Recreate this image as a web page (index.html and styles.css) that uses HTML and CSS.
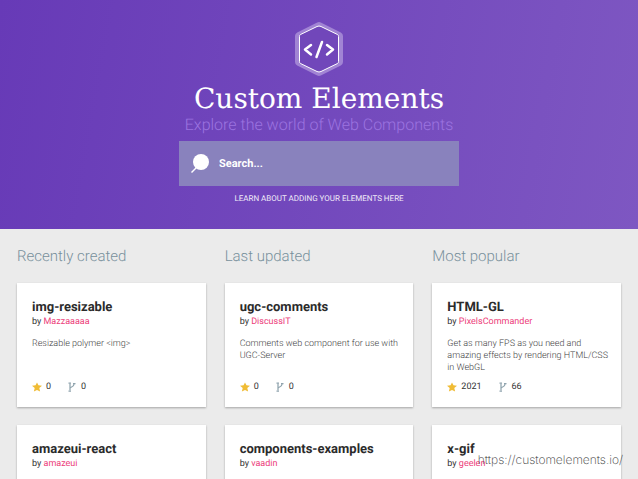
FILE: index.html
```html
<!DOCTYPE html>
<html lang="en">
<head>
    <meta charset="utf-8">
    <meta name="viewport" content="width=device-width, initial-scale=1">
    <title>Custom Elements</title>
    <link rel="stylesheet" href="styles.css">
</head>
<body>
<svg class="sprite" aria-hidden="true">
    <symbol id="star" viewBox="0 0 24 24">
        <path d="M12 1l3.500 7 8.500 1-6.500 5.500 2 8.500L12 19l-7.500 4 2-8.500L0 9l8.500-1z" fill="#f0bc35"/>
    </symbol>
    <symbol id="fork" viewBox="0 0 20 20">
        <g fill="none" stroke="#90a4ae" stroke-width="2.500">
            <path d="M6 3v14M14 4c0 7-8 5-8 9"/>
            <path d="M3 2h5M12 3h5M3 18h5"/>
        </g>
    </symbol>
</svg>

<header class="header">
    <svg class="logo" viewBox="0 0 50 56" aria-hidden="true">
        <path d="M25 5L45 15V41L25 51L5 41V15Z" fill="#a184d4" stroke="#a184d4" stroke-width="8" stroke-linejoin="round"/>
        <path d="M23 5.500Q25 4.500 27 5.500L43.500 13.500Q44.500 14 44.500 15.500V40.500Q44.500 42 43.500 42.500L27 50.500Q25 51.500 23 50.500L6.500 42.500Q5.500 42 5.500 40.500V15.500Q5.500 14 6.500 13.500Z" fill="#7147ba" stroke="#fff" stroke-width="1"/>
        <path d="M17 24L11 28.500L17 33.500M33 24L39 28.500L33 33.500M28 21L22.500 36" fill="none" stroke="#fff" stroke-width="2.500" stroke-linecap="round" stroke-linejoin="round"/>
    </svg>
    <h1 class="title">Custom Elements</h1>
    <p class="tagline">Explore the world of Web Components</p>
    <form class="search">
        <label for="search" class="search-label" aria-label="Search">
            <svg class="search-icon" viewBox="0 0 20 20" aria-hidden="true">
                <circle cx="10" cy="8" r="8" fill="#fff"/>
                <path d="M6 13L0.500 18.500" stroke="#fff" stroke-width="1.500"/>
            </svg>
        </label>
        <input type="text" id="search" class="search-input" placeholder="Search...">
    </form>
    <a href="#" class="learn">LEARN ABOUT ADDING YOUR ELEMENTS HERE</a>
</header>

<main class="columns">
    <section class="column">
        <h2 class="column-title">Recently created</h2>
        <article class="card">
            <h3 class="name">img-resizable</h3>
            <p class="author">by <a href="#">Mazzaaaaa</a></p>
            <p class="description">Resizable polymer &lt;img&gt;</p>
            <div class="stats">
                <span class="stat"><svg class="icon"><use href="#star"/></svg>0</span>
                <span class="stat"><svg class="icon"><use href="#fork"/></svg>0</span>
            </div>
        </article>
        <article class="card">
            <h3 class="name">amazeui-react</h3>
            <p class="author">by <a href="#">amazeui</a></p>
        </article>
    </section>
    <section class="column">
        <h2 class="column-title">Last updated</h2>
        <article class="card">
            <h3 class="name">ugc-comments</h3>
            <p class="author">by <a href="#">DiscussIT</a></p>
            <p class="description">Comments web component for use with UGC-Server</p>
            <div class="stats">
                <span class="stat"><svg class="icon"><use href="#star"/></svg>0</span>
                <span class="stat"><svg class="icon"><use href="#fork"/></svg>0</span>
            </div>
        </article>
        <article class="card">
            <h3 class="name">components-examples</h3>
            <p class="author">by <a href="#">vaadin</a></p>
        </article>
    </section>
    <section class="column">
        <h2 class="column-title">Most popular</h2>
        <article class="card">
            <h3 class="name">HTML-GL</h3>
            <p class="author">by <a href="#">PixelsCommander</a></p>
            <p class="description">Get as many FPS as you need and amazing effects by rendering HTML/CSS in WebGL</p>
            <div class="stats">
                <span class="stat"><svg class="icon"><use href="#star"/></svg>2021</span>
                <span class="stat"><svg class="icon"><use href="#fork"/></svg>66</span>
            </div>
        </article>
        <article class="card">
            <h3 class="name">x-gif</h3>
            <p class="author">by <a href="#">geelen</a></p>
        </article>
    </section>
</main>
<a href="#" class="source">https://customelements.io/</a>
</body>
</html>
```

FILE: styles.css
```css
* {
    margin: 0;
    padding: 0;
    box-sizing: border-box;
}

body {
    position: relative;
    height: 100vh;
    overflow: hidden;
    background: #ebebeb;
    color: #333;
    font-family: Roboto, "Liberation Sans", sans-serif;
    font-size: 9px;
    line-height: 12px;
    text-rendering: geometricPrecision;
}

a {
    text-decoration: none;
}

.sprite {
    position: absolute;
    width: 0;
    height: 0;
}

.header {
    display: flex;
    flex-direction: column;
    align-items: center;
    padding: 21px 16px 24px;
    background: linear-gradient(100deg, #673ab7, #7e57c2);
    color: #fff;
}

.logo {
    width: 50px;
    height: 56px;
}

.title {
    margin-top: 4px;
    font-family: "Roboto Slab", "DejaVu Serif", serif;
    font-size: 28px;
    font-weight: 400;
    line-height: 36px;
}

.tagline {
    color: #9c74e0;
    font-size: 16px;
    font-weight: 300;
    line-height: 16px;
}

.search {
    display: flex;
    align-items: center;
    width: 280px;
    max-width: 100%;
    height: 45px;
    margin-top: 8px;
    padding: 0 12px;
    background: #8982bd;
}

.search-label,
.search-icon {
    display: block;
    width: 20px;
    height: 20px;
}

.search-input {
    flex: 1;
    min-width: 0;
    margin-left: 8px;
    border: none;
    outline: none;
    background: none;
    color: #fff;
    font-family: inherit;
    font-size: 11px;
    font-weight: 700;
    text-rendering: inherit;
}

.search-input::placeholder {
    color: #fff;
    opacity: 1;
}

.learn {
    margin-top: 7px;
    color: #f0eaf8;
    font-size: 8px;
}

.columns {
    display: grid;
    grid-template-columns: repeat(3, 1fr);
    gap: 19px;
    padding: 18px 17px;
}

.column {
    display: flex;
    flex-direction: column;
    gap: 18px;
}

.column-title {
    color: #78909c;
    font-size: 15px;
    font-weight: 300;
    line-height: 18px;
}

.card {
    display: flex;
    flex-direction: column;
    min-height: 124px;
    padding: 17px 10px 14px 15px;
    background: #fff;
    box-shadow: 0 1px 2px rgba(0, 0, 0, .3);
}

.name {
    color: #2b2b2b;
    font-size: 13px;
    font-weight: 700;
    line-height: 16px;
}

.author a {
    color: #ec407a;
}

.description {
    margin-top: 10px;
    color: #444;
    font-weight: 300;
}

.stats {
    display: flex;
    gap: 16px;
    margin-top: auto;
}

.stat {
    display: flex;
    align-items: center;
    gap: 4px;
}

.icon {
    width: 10px;
    height: 10px;
}

.source {
    position: absolute;
    right: 15px;
    bottom: 11px;
    color: #333;
    font-family: Inter, "Liberation Sans", sans-serif;
    font-size: 12px;
    font-weight: 200;
    line-height: 16px;
}
```
